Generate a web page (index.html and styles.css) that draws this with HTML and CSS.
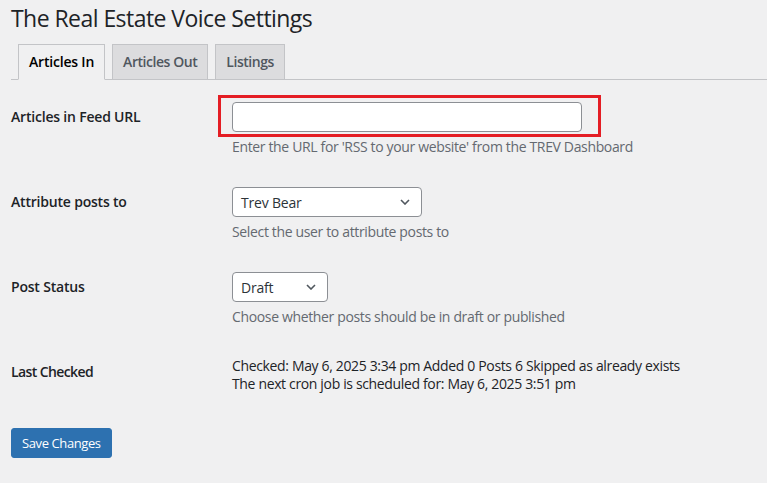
FILE: index.html
```html
<!DOCTYPE html>
<html>
<head>
<meta charset="utf-8">
<link rel="stylesheet" href="styles.css">
</head>
<body>
<div class="wrap">
  <h1 class="title">The Real Estate Voice Settings</h1>
  <nav class="tabs">
    <a class="tab active">Articles In</a>
    <a class="tab">Articles Out</a>
    <a class="tab">Listings</a>
  </nav>
  <div class="form-table">
    <div class="row">
      <div class="label">Articles in Feed URL</div>
      <div class="field">
        <span class="highlight"><input class="text-input" type="text"></span>
        <p class="description">Enter the URL for 'RSS to your website' from the TREV Dashboard</p>
      </div>
    </div>
    <div class="row">
      <div class="label">Attribute posts to</div>
      <div class="field">
        <div class="select select-wide"><span>Trev Bear</span><svg class="chev" viewBox="0 0 10 6" width="10" height="6"><path d="M1 1l4 4 4-4" fill="none" stroke="#50575e" stroke-width="1.6"/></svg></div>
        <p class="description">Select the user to attribute posts to</p>
      </div>
    </div>
    <div class="row">
      <div class="label">Post Status</div>
      <div class="field">
        <div class="select select-narrow"><span>Draft</span><svg class="chev" viewBox="0 0 10 6" width="10" height="6"><path d="M1 1l4 4 4-4" fill="none" stroke="#50575e" stroke-width="1.6"/></svg></div>
        <p class="description">Choose whether posts should be in draft or published</p>
      </div>
    </div>
    <div class="row">
      <div class="label condensed">Last Checked</div>
      <div class="field status">
        <div>Checked: May 6, 2025 3:34 pm Added 0 Posts 6 Skipped as already exists</div>
        <div>The next cron job is scheduled for: May 6, 2025 3:51 pm</div>
      </div>
    </div>
  </div>
  <div class="submit">
    <button class="button-primary">Save Changes</button>
  </div>
</div>
</body>
</html>
```
FILE: styles.css
```css
html, body {
  margin: 0;
  padding: 0;
  background: #f0f0f1;
}
body {
  font-family: "Open Sans", "Noto Sans", sans-serif;
  color: #1d2327;
  font-size: 14px;
}
.wrap {
  padding-left: 11px;
}
.title {
  margin: 0;
  padding: 3px 0 6px;
  font-size: 23px;
  font-weight: 400;
  line-height: 30px;
  color: #1d2327;
  letter-spacing: -0.55px;
}
.tabs {
  display: flex;
  padding-top: 5px;
  border-bottom: 1px solid #c3c4c7;
}
.tab {
  margin-left: 7px;
  margin-bottom: -1px;
  padding: 5px 10px;
  border: 1px solid #c3c4c7;
  background: #dcdcde;
  font-size: 14px;
  font-weight: 600;
  line-height: 24px;
  color: #50575e;
  letter-spacing: -0.45px;
}
.tab.active {
  background: #f0f0f1;
  border-bottom-color: #f0f0f1;
  color: #000;
  letter-spacing: -0.2px;
}
.form-table {
  margin-top: 7px;
}
.row {
  display: flex;
}
.label {
  width: 200px;
  padding: 21px 10px 19px 0;
  font-weight: 600;
  line-height: 18px;
  color: #1d2327;
  letter-spacing: -0.2px;
}
.field {
  padding: 15px 10px 15px 11px;
}
.highlight {
  position: relative;
  display: inline-block;
  vertical-align: top;
}
.highlight::after {
  content: "";
  position: absolute;
  left: -14px;
  right: -19px;
  top: -7px;
  bottom: -5px;
  border: 3px solid #e41d24;
  pointer-events: none;
}
.text-input {
  display: block;
  box-sizing: border-box;
  width: 350px;
  height: 30px;
  margin: 0;
  padding: 0 8px;
  border: 1px solid #8c8f94;
  border-radius: 4px;
  background: #fff;
  font: inherit;
}
.description {
  margin: 4px 0 0;
  line-height: 21px;
  color: #646970;
  letter-spacing: -0.35px;
}
.select {
  box-sizing: border-box;
  height: 30px;
  display: flex;
  align-items: center;
  justify-content: space-between;
  padding: 0 11px 0 8px;
  border: 1px solid #8c8f94;
  border-radius: 4px;
  background: #fff;
  color: #2c3338;
  letter-spacing: -0.2px;
}
.select-wide { width: 190px; }
.select-narrow { width: 96px; }
.chev { display: block; }
.condensed {
  letter-spacing: -0.6px;
}
.status {
  line-height: 18px;
  padding-top: 15px;
  padding-bottom: 15px;
  color: #1d2327;
  letter-spacing: -0.35px;
}
.submit {
  padding-top: 20px;
}
.button-primary {
  height: 30px;
  padding: 0 10px;
  border: 1px solid #2d71b0;
  border-radius: 3px;
  background: #2d71b0;
  color: #fff;
  font-family: inherit;
  font-size: 13px;
  letter-spacing: -0.4px;
  line-height: 28px;
}
```
